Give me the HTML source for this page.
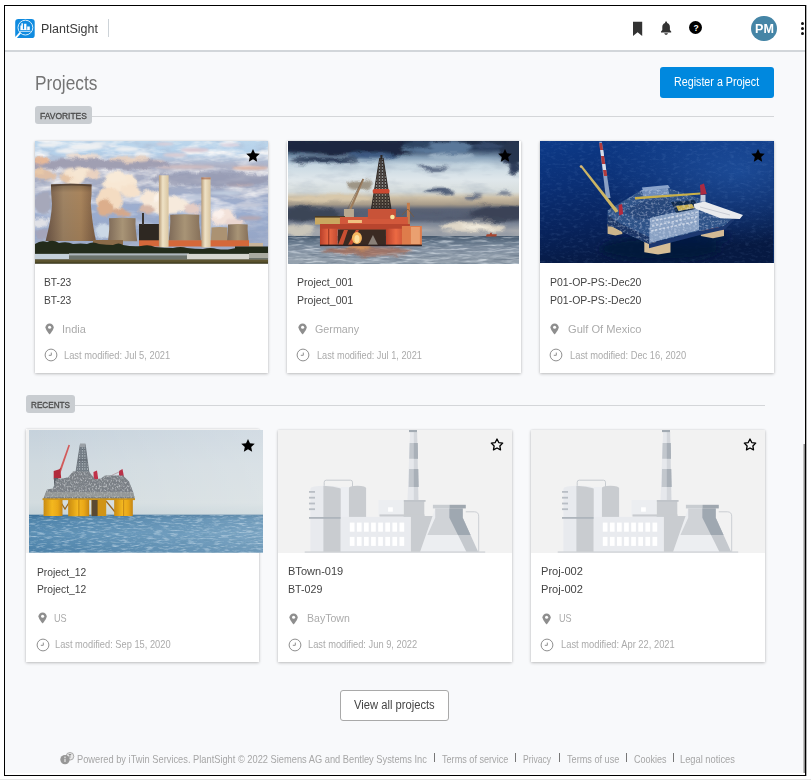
<!DOCTYPE html>
<html lang="en">
<head>
<meta charset="utf-8">
<title>PlantSight - Projects</title>
<style>
*{box-sizing:border-box;margin:0;padding:0}
html,body{width:811px;height:780px;overflow:hidden;background:#fff}
body{position:relative;font-family:"Liberation Sans",sans-serif;color:#3b3b3b;-webkit-font-smoothing:antialiased}
.abs{position:absolute}
#botline{left:0;top:779px;width:811px;height:1px;background:#e6e6e6}
#frame{left:4px;top:5px;width:802px;height:771px;border:1px solid #000;background:#fff;overflow:hidden}
#rb{left:806px;top:5px;width:1px;height:771px;background:#b0b0b0}
#content{left:5px;top:52px;width:800px;height:721px;background:#f8f9fb}
#hdrline{left:5px;top:50px;width:800px;height:2px;background:#d2d6da}
#scroll{left:803px;top:444px;width:2px;height:329px;background:linear-gradient(90deg,#d8d8d8,#777)}
.t{position:absolute;white-space:nowrap;line-height:1}
.badge{position:absolute;background:#c9cdd1;border-radius:3px}
.hline{position:absolute;height:1px;background:#d4d6d9}
.card{position:absolute;background:#fff;box-shadow:0 1px 3px rgba(0,0,0,.22),0 0 2px rgba(0,0,0,.10)}
.img{position:absolute;overflow:hidden}
.img svg{display:block}
.name{font-size:11.8px;color:#444}
.loc{font-size:11.6px;color:#ababab}
.mod{font-size:10.4px;color:#ababab}
.ft{font-size:10.2px;color:#a6a6a6}
.sep{position:absolute;width:1px;height:9px;top:753px;background:#777}
</style>
</head>
<body>
<div id="botline" class="abs"></div>
<div id="frame" class="abs"></div>
<div id="rb" class="abs"></div>
<div id="content" class="abs"></div>
<div id="hdrline" class="abs"></div>
<div id="scroll" class="abs"></div>

<!-- HEADER -->
<svg class="abs" style="left:15px;top:18px" width="21" height="21" viewBox="0 0 21 21">
  <rect x="0.2" y="0.9" width="19.5" height="19.2" rx="3.2" fill="#0f8be0"/>
  <circle cx="10.4" cy="9.6" r="7.4" fill="none" stroke="#d9eefb" stroke-width="1"/>
  <path d="M4.9 15.2 L1 19.6" stroke="#fff" stroke-width="1.8" stroke-linecap="round"/>
  <path d="M5.4 12V7.6h1V5.2h1.5v6h1.2V5.8h2.3v6h.8V8.6h2.6V12z" fill="#fff"/>
  <path d="M5 13.3h10.6" stroke="#cfe8fa" stroke-width="1"/>
</svg>
<div class="t" id="brand" style="left:41.5px;top:21.5px;font-size:13px;color:#3a3a3a;left:40.74px;top:22.2px;transform-origin:0 0;transform:scaleX(0.96)">PlantSight</div>
<div class="abs" style="left:108px;top:19px;width:1px;height:18px;background:#cdd3d8"></div>

<svg class="abs" style="left:632px;top:21px" width="11" height="16" viewBox="0 0 11 16"><path d="M1 0.8h9.2v14.2L5.6 11.2 1 15z" fill="#333"/></svg>
<svg class="abs" style="left:660px;top:21px" width="12" height="15" viewBox="0 0 12 15"><path d="M6.1 0.6c.6 0 1 .4 1 1v.3c1.800 .5 2.800 2 2.800 4v3.200l1.300 1.500v.8H1v-.8l1.300-1.500V5.900c0-2 1-3.500 2.800-4v-.3c0-.6.400-1 1-1z" fill="#333"/><path d="M4.300 12.300h3.600c0 .9-.8 1.500-1.800 1.500s-1.800-.6-1.800-1.500z" fill="#333"/></svg>
<div class="abs" style="left:689.300px;top:21.300px;width:13px;height:13px;border-radius:50%;background:#000"></div>
<div class="t" style="left:693.400px;top:23.900px;font-size:8.500px;font-weight:bold;color:#fff">?</div>
<div class="abs" style="left:751.400px;top:15.700px;width:25.500px;height:25.500px;border-radius:50%;background:#4585a6"></div>
<div class="t" id="pm" style="left:755.500px;top:21.500px;font-size:12.700px;font-weight:bold;color:#fff;left:755.1px;top:23.2px;transform-origin:0 0;transform:scaleX(0.991)">PM</div>
<div class="abs" style="left:801px;top:22px;width:3px;height:3px;border-radius:50%;background:#111"></div>
<div class="abs" style="left:801px;top:27px;width:3px;height:3px;border-radius:50%;background:#111"></div>
<div class="abs" style="left:801px;top:31.500px;width:3px;height:3px;border-radius:50%;background:#111"></div>

<!-- TITLE -->
<div class="t" id="title" style="left:35px;top:73px;font-size:19.500px;color:#747474;left:34.51px;top:74.3px;transform-origin:0 0;transform:scaleX(0.885)">Projects</div>
<div class="abs" style="left:660px;top:67px;width:114px;height:30.500px;border-radius:3px;background:#0088de"></div>
<div class="t" id="regbtn" style="left:674px;top:76px;font-size:12px;color:#fff;left:674.2px;top:76.1px;transform-origin:0 0;transform:scaleX(0.893)">Register a Project</div>

<!-- FAVORITES -->
<div class="hline" style="left:92px;top:116px;width:682px"></div>
<div class="badge" style="left:35px;top:106.300px;width:57.300px;height:17.400px"></div>
<div class="t" id="fav" style="left:39.500px;top:110.500px;font-size:9.900px;color:#4c4c4c;-webkit-text-stroke:.35px #4c4c4c;left:39.7px;top:110.7px;transform-origin:0 0;transform:scaleX(0.858)">FAVORITES</div>

<!-- RECENTS -->
<div class="hline" style="left:75px;top:405px;width:690px"></div>
<div class="badge" style="left:26px;top:395.400px;width:49.400px;height:17.400px"></div>
<div class="t" id="rec" style="left:31px;top:399.500px;font-size:9.900px;color:#4c4c4c;-webkit-text-stroke:.35px #4c4c4c;left:30.7px;top:400.0px;transform-origin:0 0;transform:scaleX(0.828)">RECENTS</div>

<!-- CARDS -->
<div class="card" style="left:35px;top:141px;width:233px;height:232px"></div>
<div class="img" style="left:35px;top:141px;width:233px;height:122.5px;background:#9fb4c8"><svg width="233" height="122.5" viewBox="0 0 233 122.500" preserveAspectRatio="none">
<defs>
<linearGradient id="p1sky" x1="0" y1="0" x2="0" y2="1"><stop offset="0" stop-color="#bcd6ec"/><stop offset=".1" stop-color="#b4d0ea"/><stop offset=".2" stop-color="#b0b4c8"/><stop offset=".36" stop-color="#a4acc4"/><stop offset=".55" stop-color="#9caed0"/><stop offset=".8" stop-color="#96a6c6"/><stop offset="1" stop-color="#aeb6cc"/></linearGradient>
<linearGradient id="p1t" x1="0" y1="0" x2="1" y2="0"><stop offset="0" stop-color="#6e5646"/><stop offset=".35" stop-color="#a08464"/><stop offset=".7" stop-color="#a8845c"/><stop offset="1" stop-color="#7e5e44"/></linearGradient>
<linearGradient id="p1t2" x1="0" y1="0" x2="1" y2="0"><stop offset="0" stop-color="#7e6a58"/><stop offset=".5" stop-color="#a89476"/><stop offset="1" stop-color="#86705a"/></linearGradient>
<linearGradient id="p1c" x1="0" y1="0" x2="1" y2="0"><stop offset="0" stop-color="#b89c78"/><stop offset=".4" stop-color="#efe2c6"/><stop offset="1" stop-color="#d8c4a0"/></linearGradient>
<linearGradient id="p1v" x1="0" y1="0" x2="0" y2="1"><stop offset="0" stop-color="#000" stop-opacity=".25"/><stop offset=".15" stop-color="#000" stop-opacity="0"/><stop offset="1" stop-color="#000" stop-opacity=".08"/></linearGradient>
<filter id="p1b" x="-20%" y="-20%" width="140%" height="140%"><feTurbulence type="fractalNoise" baseFrequency=".09" numOctaves="3" seed="5" result="n"/><feGaussianBlur in="SourceGraphic" stdDeviation="1" result="b"/><feDisplacementMap in="b" in2="n" scale="7" xChannelSelector="R" yChannelSelector="G"/></filter>
<filter id="p1b2" x="-20%" y="-20%" width="140%" height="140%"><feGaussianBlur stdDeviation="1.100"/></filter>
<filter id="p1n" x="0" y="0" width="100%" height="100%"><feTurbulence type="fractalNoise" baseFrequency=".035 .11" numOctaves="4" seed="7"/><feColorMatrix values="0 0 0 0 1  0 0 0 0 .97  0 0 0 0 .95  0 0 0 2.600 -1.050"/></filter>
<filter id="p1n2" x="0" y="0" width="100%" height="100%"><feTurbulence type="fractalNoise" baseFrequency=".05 .14" numOctaves="3" seed="23"/><feColorMatrix values="0 0 0 0 .36  0 0 0 0 .38  0 0 0 0 .50  0 0 0 2.200 -1.050"/></filter>
<filter id="p1g" x="0" y="0" width="100%" height="100%"><feTurbulence type="fractalNoise" baseFrequency=".9" numOctaves="2" seed="3"/><feColorMatrix values="0 0 0 0 0  0 0 0 0 0  0 0 0 0 0  0 0 0 .9 -.35"/></filter>
<linearGradient id="p1m" x1="0" y1="0" x2="0" y2="1"><stop offset="0" stop-color="#fff"/><stop offset=".55" stop-color="#fff" stop-opacity=".8"/><stop offset=".85" stop-color="#fff" stop-opacity=".25"/></linearGradient>
<mask id="p1mk"><rect width="233" height="105" fill="url(#p1m)"/></mask>
</defs>
<rect width="233" height="122.500" fill="url(#p1sky)"/>
<rect width="233" height="105" filter="url(#p1n2)" opacity=".35"/><g mask="url(#p1mk)"><rect width="233" height="105" filter="url(#p1n)" opacity=".9"/></g>
<!-- high clouds -->
<g filter="url(#p1b2)" fill="#eef0f2">
<ellipse cx="12" cy="4" rx="10" ry="2"/><ellipse cx="52" cy="6" rx="16" ry="2.500"/><ellipse cx="64" cy="2.500" rx="7" ry="1.500"/><ellipse cx="92" cy="8" rx="12" ry="2"/><ellipse cx="30" cy="10" rx="10" ry="2"/>
<ellipse cx="130" cy="3" rx="9" ry="1.500" fill="#dccfd8"/><ellipse cx="160" cy="9" rx="14" ry="2" fill="#d8c8d2"/><ellipse cx="195" cy="4" rx="10" ry="1.500" fill="#dcd0dc"/><ellipse cx="140" cy="14" rx="12" ry="2" fill="#d9cdd4"/><ellipse cx="108" cy="13" rx="8" ry="2"/>
<ellipse cx="215" cy="27" rx="18" ry="1.700" fill="#dcb4a4"/><ellipse cx="150" cy="26" rx="30" ry="2" fill="#cdbcc0"/><ellipse cx="120" cy="21" rx="10" ry="2" fill="#d8c4c0"/>
<ellipse cx="190" cy="52" rx="16" ry="1.800" fill="#c3cfe0"/><ellipse cx="215" cy="64" rx="14" ry="1.800" fill="#c8ccda"/><ellipse cx="160" cy="56" rx="10" ry="2" fill="#bfc9dc"/><ellipse cx="205" cy="43" rx="14" ry="2.500" fill="#b8a8b0"/><ellipse cx="150" cy="41" rx="7" ry="2.500" fill="#c6cad8"/><ellipse cx="215" cy="77" rx="12" ry="2" fill="#b4a8b4"/>
</g>
<!-- cloud band & steam -->
<g filter="url(#p1b)">
<ellipse cx="60" cy="23" rx="75" ry="5.500" fill="#a09fb2"/>
<ellipse cx="175" cy="38" rx="60" ry="7" fill="#9599b1" opacity=".8"/>
<ellipse cx="6" cy="20" rx="7" ry="3.500" fill="#e6b898"/>
<ellipse cx="48" cy="15.500" rx="18" ry="2.500" fill="#ecdcd0"/><ellipse cx="95" cy="18.500" rx="20" ry="2.500" fill="#e6d0c0"/>
<ellipse cx="9" cy="34" rx="12" ry="6" fill="#dfbfa6"/><ellipse cx="4" cy="30" rx="5" ry="4" fill="#e8c8a8"/>
<ellipse cx="8" cy="62" rx="9" ry="11" fill="#a6a8ba"/><ellipse cx="6" cy="81" rx="9" ry="4" fill="#e0e1e6"/><ellipse cx="8" cy="93" rx="8" ry="5" fill="#a4a4ba"/>
<ellipse cx="38" cy="36" rx="11" ry="8" fill="#f6e4cf"/><ellipse cx="47" cy="32" rx="10" ry="6" fill="#f6e6d2"/><ellipse cx="58" cy="33" rx="7" ry="4.500" fill="#ead2c0"/><ellipse cx="30" cy="38" rx="6" ry="4" fill="#e6c6a8"/>
<ellipse cx="84" cy="42" rx="17" ry="10" fill="#f8e8d4"/><ellipse cx="74" cy="60" rx="14" ry="13" fill="#f4dcc2"/><ellipse cx="96" cy="50" rx="10" ry="7" fill="#f6e2cc"/><ellipse cx="70" cy="67" rx="9" ry="8" fill="#dcae8c"/><ellipse cx="86" cy="72" rx="10" ry="4" fill="#d4a88c"/><ellipse cx="80" cy="36" rx="9" ry="5" fill="#f8ead8"/>
<ellipse cx="68" cy="90" rx="8" ry="8" fill="#cbd8e6"/>
<ellipse cx="117" cy="58" rx="12" ry="9" fill="#f7e8d8"/><ellipse cx="134" cy="64" rx="20" ry="9" fill="#f6eadc"/><ellipse cx="157" cy="68" rx="9" ry="6" fill="#e4ccc4"/><ellipse cx="112" cy="68" rx="8" ry="4" fill="#d8b8a8"/><ellipse cx="126" cy="57" rx="8" ry="5" fill="#fbf3ea"/>
<ellipse cx="188" cy="76" rx="13" ry="8" fill="#f3e2da"/><ellipse cx="200" cy="82" rx="8" ry="4" fill="#ead6d0"/><ellipse cx="182" cy="73" rx="6" ry="4" fill="#fbf1ec"/>
</g>
<!-- dark building -->
<rect x="104" y="83" width="22" height="20" fill="#2e2822"/><rect x="107" y="72" width="2" height="12" fill="#3a3430"/>
<!-- cooling towers -->
<path d="M16 43.500q20-1.600 40.500 0 .5 10 -.700 19c1 14 2.500 25 5.200 37.500H10.600C14.500 85 16.500 74 17 62.500 16.300 55 16 50 16 43.500z" fill="url(#p1t)"/>
<path d="M16 43.500q20-1.600 40.500 0v2q-20-1.800-40.500 0z" fill="#5e483a" opacity=".7"/><path d="M16 43.500q20-1.600 40.500 0 .5 10 -.700 19c1 14 2.500 25 5.200 37.500H10.600C14.500 85 16.500 74 17 62.500 16.300 55 16 50 16 43.500z" fill="url(#p1v)"/>
<path d="M74 77.300q13-1 26.600 0-.4 6 .2 11 .600 6 1.400 12H73q.8-6 1.200-12 .3-5-.2-11z" fill="url(#p1t2)"/>
<path d="M135.200 73.800q14.500-1.200 29.100 0-.5 7 .3 13 .7 7 1.400 13h-32.400q.8-6 1.400-13 .5-6 .2-13z" fill="url(#p1t2)"/>
<path d="M176.400 86.500q8-.8 16.100 0-.3 4 .1 8l.6 6.500h-17.500l.5-6.500q.4-4 .2-8z" fill="#ab9272"/>
<path d="M193 83.400q9.800-1 19.700 0-.3 5 .2 9l.8 9h-21.700l.7-9q.5-4 .3-9z" fill="url(#p1t2)"/>
<!-- low brown building -->
<rect x="58" y="99" width="30" height="8" fill="#8a6a48"/>
<!-- orange band -->
<rect x="104" y="99.300" width="110" height="6.200" fill="#d4683a"/>
<rect x="214" y="102" width="14" height="4" fill="#c8b49a"/><rect x="200" y="105.500" width="33" height="7" fill="#232b1a"/>
<!-- chimneys -->
<rect x="123.900" y="34.300" width="9.700" height="72" fill="url(#p1c)"/>
<rect x="166.400" y="36.400" width="9.200" height="70" fill="url(#p1c)"/>
<rect x="166.400" y="36.400" width="9.200" height="2" fill="#a05a40" opacity=".6"/>
<!-- tree line -->
<path d="M0 103q6-4 12-2 6-3 12 1 8-2 14 1 8-1 14 0 6-3 12 0 8 1 14 1 6-3 10 0 10 2 18 1 8-2 14 1 10 1 18 1 8-2 14 0 8 1 16 1 8-2 14 0 8 1 14 0 8-2 14 0 5 0 9-1V114H0z" fill="#232b1a"/>
<!-- strip -->
<rect x="0" y="112.700" width="233" height="5.800" fill="#6c736c"/>
<rect x="0" y="113" width="34" height="5" fill="#c4d0da"/>
<rect x="34" y="112.400" width="120" height="2" fill="#aeb6bc"/>
<rect x="152" y="113" width="62" height="5.500" fill="#d6d6cf"/>
<rect x="214" y="112" width="19" height="5" fill="#a9aaa0"/>
<rect x="0" y="118.400" width="233" height="4.100" fill="#5d5530"/>
<rect x="0" y="120.800" width="233" height="1.700" fill="#4a4524"/>
</svg>
</div>
<svg class="abs" style="left:244.6px;top:148.3px" width="16" height="16" viewBox="0 0 16 16"><path d="M8.00 0.90L9.97 5.29L14.75 5.81L11.19 9.04L12.17 13.74L8.00 11.35L3.83 13.74L4.81 9.04L1.25 5.81L6.03 5.29z" fill="#000"/></svg>
<div class="t name" id="c1n1" style="left:44.8px;top:276.7px;left:44.3px;top:277.2px;transform-origin:0 0;transform:scaleX(0.868)">BT-23</div>
<div class="t name" id="c1n2" style="left:44.8px;top:294.5px;left:44.3px;top:295.0px;transform-origin:0 0;transform:scaleX(0.868)">BT-23</div>
<svg class="abs" style="left:44.9px;top:322.8px" width="9.2" height="12" viewBox="0 0 10 13"><path d="M5 0.400C2.500 0.400 0.500 2.300 0.500 4.700c0 3 4.500 7.800 4.500 7.800s4.500-4.800 4.500-7.800C9.500 2.300 7.500 0.400 5 0.400z" fill="#8e8e8e"/><circle cx="5" cy="4.600" r="1.700" fill="#fff"/></svg>
<div class="t loc" id="c1loc" style="left:62.3px;top:323.0px;left:61.55px;top:322.6px;transform-origin:0 0;transform:scaleX(0.948)">India</div>
<svg class="abs" style="left:43.6px;top:348.3px" width="14" height="14" viewBox="0 0 14 14"><circle cx="7" cy="7" r="5.900" fill="none" stroke="#8f8f8f" stroke-width="1"/><path d="M7.300 4.600v2.700H4.800" fill="none" stroke="#8f8f8f" stroke-width="1"/></svg>
<div class="t mod" id="c1mod" style="left:63.8px;top:350.5px;left:63.5px;top:351.2px;transform-origin:0 0;transform:scaleX(0.897)">Last modified: Jul 5, 2021</div>
<div class="card" style="left:287px;top:141px;width:233.7px;height:232px"></div>
<div class="img" style="left:288.2px;top:141px;width:231px;height:122.5px;background:#7b8fa0"><svg width="231" height="122.5" viewBox="0 0 231.200 122.500" preserveAspectRatio="none">
<defs>
<linearGradient id="p2sky" x1="0" y1="0" x2="0" y2="1"><stop offset="0" stop-color="#1c2a42"/><stop offset=".08" stop-color="#263a58"/><stop offset=".17" stop-color="#86a0b8"/><stop offset=".25" stop-color="#c8d8e2"/><stop offset=".4" stop-color="#dfe7eb"/><stop offset=".53" stop-color="#d8dedd"/><stop offset=".59" stop-color="#cdbfa6"/><stop offset=".66" stop-color="#a89c8a"/><stop offset=".71" stop-color="#5c6476"/><stop offset=".8" stop-color="#4c5468"/><stop offset=".86" stop-color="#7e8796"/><stop offset=".93" stop-color="#a8aaae"/><stop offset="1" stop-color="#9aa0a8"/></linearGradient>
<linearGradient id="p2sea" x1="0" y1="0" x2="0" y2="1"><stop offset="0" stop-color="#44566a"/><stop offset=".2" stop-color="#64768a"/><stop offset=".5" stop-color="#8a98a8"/><stop offset="1" stop-color="#96a2ae"/></linearGradient>
<linearGradient id="p2leg" x1="0" y1="0" x2="1" y2="0"><stop offset="0" stop-color="#b8402a"/><stop offset=".5" stop-color="#ec6a44"/><stop offset="1" stop-color="#c04a30"/></linearGradient>
<filter id="p2b" x="-20%" y="-20%" width="140%" height="140%"><feTurbulence type="fractalNoise" baseFrequency=".05 .1" numOctaves="3" seed="14" result="n"/><feGaussianBlur in="SourceGraphic" stdDeviation="1.800" result="b"/><feDisplacementMap in="b" in2="n" scale="9" xChannelSelector="R" yChannelSelector="G"/></filter><pattern id="p2lat" width="3" height="3" patternUnits="userSpaceOnUse"><path d="M0 0L3 3M3 0L0 3M0 1.500h3" stroke="#2c2420" stroke-width=".7"/></pattern>
<filter id="p2b1" x="-20%" y="-20%" width="140%" height="140%"><feGaussianBlur stdDeviation=".55"/></filter>
<filter id="p2n" x="0" y="0" width="100%" height="100%"><feTurbulence type="fractalNoise" baseFrequency=".03 .09" numOctaves="4" seed="11"/><feColorMatrix values="0 0 0 0 .1  0 0 0 0 .15  0 0 0 0 .25  0 0 0 2.400 -1.100"/></filter>
<filter id="p2w" x="0" y="0" width="100%" height="100%"><feTurbulence type="fractalNoise" baseFrequency=".06 .5" numOctaves="3" seed="5"/><feColorMatrix values="0 0 0 0 .85  0 0 0 0 .9  0 0 0 0 .95  0 0 0 2.800 -1.300"/></filter>
<filter id="p2w2" x="0" y="0" width="100%" height="100%"><feTurbulence type="fractalNoise" baseFrequency=".05 .45" numOctaves="3" seed="19"/><feColorMatrix values="0 0 0 0 .1  0 0 0 0 .14  0 0 0 0 .2  0 0 0 2.600 -1.200"/></filter>
</defs>
<rect width="231.200" height="96" fill="url(#p2sky)"/>
<rect width="231.200" height="96" filter="url(#p2n)" opacity=".18"/>
<g filter="url(#p2b)">
<ellipse cx="70" cy="6" rx="85" ry="8" fill="#1a2840"/>
<ellipse cx="36" cy="19" rx="34" ry="3" fill="#2a3a56"/>
<ellipse cx="85" cy="15" rx="24" ry="3.500" fill="#3c5a82"/>
<ellipse cx="150" cy="7" rx="36" ry="6" fill="#5a789a"/>
<ellipse cx="165" cy="16" rx="24" ry="4" fill="#9cb2c6"/>
<ellipse cx="130" cy="4" rx="14" ry="4" fill="#2e4464"/>
<ellipse cx="224" cy="11" rx="12" ry="13" fill="#26364f"/>
<ellipse cx="228" cy="28" rx="6" ry="6" fill="#2e3e5a"/>
<ellipse cx="200" cy="5" rx="14" ry="4" fill="#34486a"/>
<ellipse cx="145" cy="27" rx="14" ry="2.300" fill="#54647e"/>
<ellipse cx="152" cy="50" rx="15" ry="3.200" fill="#4e5c76"/>
<ellipse cx="186" cy="56.500" rx="9" ry="2.300" fill="#5a6680"/>
<ellipse cx="216" cy="52" rx="7" ry="1.800" fill="#5e6a82"/>
<ellipse cx="72" cy="44" rx="12" ry="5" fill="#a49c8c"/>
<ellipse cx="40" cy="57" rx="45" ry="3.500" fill="#d8c8aa"/>
<ellipse cx="20" cy="73" rx="30" ry="6.500" fill="#3a4456"/>
<ellipse cx="212" cy="72" rx="30" ry="8" fill="#3a4256"/>
<ellipse cx="120" cy="75" rx="60" ry="4" fill="#566074"/>
<ellipse cx="12" cy="89" rx="16" ry="5" fill="#cac6ba"/>
<ellipse cx="185" cy="86" rx="32" ry="5" fill="#e0d8c8"/>
<ellipse cx="190" cy="86" rx="15" ry="2.500" fill="#f2ecde"/>
</g>
<!-- sea -->
<rect y="95" width="231.200" height="27.500" fill="url(#p2sea)"/>
<rect y="95" width="231.200" height="27.500" filter="url(#p2w)" opacity=".55"/>
<rect y="95" width="231.200" height="27.500" filter="url(#p2w2)" opacity=".5"/>
<g filter="url(#p2b)"><ellipse cx="80" cy="110" rx="45" ry="5" fill="#a85a3c" opacity=".6"/><ellipse cx="70" cy="106" rx="12" ry="3" fill="#e89a50" opacity=".7"/></g>
<!-- ship -->
<path d="M198 95.500l1-2.200h3l.5-1.500h1.500v1.500H209l-.5 2.200z" fill="#a8452e"/>
<!-- smoke -->
<g filter="url(#p2b)"><ellipse cx="72" cy="44" rx="12" ry="5" fill="#9c9484" opacity=".8"/></g>
<!-- derrick -->
<g filter="url(#p2b1)">
<path d="M91.800 17h3.400L103.500 71H83z" fill="#3a302c" opacity=".45"/><path d="M91.800 17h3.400L103.500 71H83z" fill="url(#p2lat)"/><path d="M91.800 17L83 71M95.200 17L103.500 71" stroke="#2a2420" stroke-width=".9"/>
<path d="M92.500 14h2v4h-2z" fill="#2a2420"/>
<rect x="84.800" y="48" width="16.800" height="4.600" rx="1.500" fill="#cc4a30"/>
<path d="M74.600 37.500l1.600.8L61 74.500l-2.400-.6z" fill="#9c7c5c"/>
<path d="M75 38L57.500 72" stroke="#6e5a48" stroke-width=".6"/>
<rect x="56" y="68" width="10" height="8" fill="#b8a890"/>
<!-- mast right -->
<rect x="119" y="61.800" width="3" height="24" fill="#c47e4e"/>
<path d="M114 74l6-6 6 8" stroke="#7a5a3a" stroke-width=".8" fill="none"/>
<!-- deck -->
<rect x="27" y="75.500" width="27" height="8" fill="#c9a860"/>
<rect x="27" y="75" width="30" height="1.600" fill="#4a3a28"/>
<rect x="52" y="76" width="68" height="13" fill="#d2583a"/>
<rect x="80" y="68" width="28" height="10" fill="#c85238"/>
<circle cx="104.500" cy="76" r="2.300" fill="#f8e8a0"/>
<rect x="32" y="83" width="90" height="5.500" fill="#b8452e"/>
<rect x="60" y="79" width="14" height="3" fill="#f0c080"/>
<!-- legs -->
<rect x="32" y="87.700" width="17.700" height="16.500" fill="url(#p2leg)"/>
<rect x="40.300" y="87.700" width="1" height="16.500" fill="#8a3020"/>
<rect x="98" y="87.700" width="20" height="16.500" fill="url(#p2leg)"/>
<rect x="114" y="85" width="20" height="19" fill="#de7c4c"/>
<rect x="123" y="86" width="9" height="17" fill="#eaa070"/>
<rect x="50" y="88.500" width="48" height="15.500" fill="#3a2a24"/>
<path d="M50 104l6-15h4l-5 15zM60 104l8-15h3l-7 15z" fill="#c85030"/>
<ellipse cx="69" cy="97" rx="5" ry="6" fill="#f6b860"/>
<ellipse cx="69" cy="98" rx="2.500" ry="4" fill="#fde0a0"/>
<path d="M80 104l5-10 5 10z" fill="#8a8078"/>
<rect x="32" y="103.600" width="102" height="1.500" fill="#2e2420"/>
</g>
</svg>
</div>
<svg class="abs" style="left:497.3px;top:148.3px" width="16" height="16" viewBox="0 0 16 16"><path d="M8.00 0.90L9.97 5.29L14.75 5.81L11.19 9.04L12.17 13.74L8.00 11.35L3.83 13.74L4.81 9.04L1.25 5.81L6.03 5.29z" fill="#000"/></svg>
<div class="t name" id="c2n1" style="left:297.6px;top:276.7px;left:297.4px;top:277.2px;transform-origin:0 0;transform:scaleX(0.893)">Project_001</div>
<div class="t name" id="c2n2" style="left:297.6px;top:294.5px;left:297.4px;top:295.0px;transform-origin:0 0;transform:scaleX(0.893)">Project_001</div>
<svg class="abs" style="left:297.7px;top:322.8px" width="9.2" height="12" viewBox="0 0 10 13"><path d="M5 0.400C2.500 0.400 0.500 2.300 0.500 4.700c0 3 4.500 7.800 4.500 7.800s4.500-4.800 4.500-7.800C9.500 2.300 7.500 0.400 5 0.400z" fill="#8e8e8e"/><circle cx="5" cy="4.600" r="1.700" fill="#fff"/></svg>
<div class="t loc" id="c2loc" style="left:315.1px;top:323.0px;left:315.0px;top:323px;transform-origin:0 0;transform:scaleX(0.927)">Germany</div>
<svg class="abs" style="left:296.4px;top:348.3px" width="14" height="14" viewBox="0 0 14 14"><circle cx="7" cy="7" r="5.900" fill="none" stroke="#8f8f8f" stroke-width="1"/><path d="M7.300 4.600v2.700H4.800" fill="none" stroke="#8f8f8f" stroke-width="1"/></svg>
<div class="t mod" id="c2mod" style="left:316.6px;top:350.5px;left:317.0px;top:351.3px;transform-origin:0 0;transform:scaleX(0.886)">Last modified: Jul 1, 2021</div>
<div class="card" style="left:540.2px;top:140.6px;width:233.5px;height:232.4px"></div>
<div class="img" style="left:540.2px;top:140.6px;width:233.5px;height:122.9px;background:#0f3f8a"><svg width="233.5" height="122.9" viewBox="0 0 233.500 122.900" preserveAspectRatio="none">
<defs>
<linearGradient id="p3sea" x1="0" y1="0" x2=".25" y2="1"><stop offset="0" stop-color="#0d3a88"/><stop offset=".35" stop-color="#0b3076"/><stop offset=".7" stop-color="#08235c"/><stop offset="1" stop-color="#061942"/></linearGradient>
<radialGradient id="p3hl" cx=".85" cy=".25" r=".6"><stop offset="0" stop-color="#2a62b4" stop-opacity=".55"/><stop offset="1" stop-color="#2a62b4" stop-opacity="0"/></radialGradient>
<filter id="p3b" x="-20%" y="-20%" width="140%" height="140%"><feGaussianBlur stdDeviation="3"/></filter>
<filter id="p3b1" x="-10%" y="-10%" width="120%" height="120%"><feGaussianBlur stdDeviation=".7"/></filter>
<filter id="p3w" x="0" y="0" width="100%" height="100%"><feTurbulence type="fractalNoise" baseFrequency=".18 .4" numOctaves="3" seed="4"/><feColorMatrix values="0 0 0 0 .3  0 0 0 0 .5  0 0 0 0 .85  0 0 0 2 -1"/></filter>
<filter id="p3t" x="0" y="0" width="100%" height="100%"><feTurbulence type="fractalNoise" baseFrequency=".35 .45" numOctaves="2" seed="9"/><feColorMatrix values="0 0 0 0 .85  0 0 0 0 .9  0 0 0 0 1  0 0 0 3 -1.400"/></filter>
<clipPath id="p3cp"><path d="M67.600 69.200L101.200 49.300 128 47l32.900 11 33.600 18-10.500 9-25.200 5.200-50.300 12.600L81.200 90.200 67.600 82.900z"/></clipPath>
</defs>
<rect width="233.500" height="122.900" fill="url(#p3sea)"/>
<rect width="233.500" height="122.900" fill="url(#p3hl)"/>
<rect width="233.500" height="122.900" filter="url(#p3w)" opacity=".16"/>
<g filter="url(#p3b)"><ellipse cx="120" cy="108" rx="60" ry="12" fill="#06153a" opacity=".85"/><ellipse cx="150" cy="96" rx="40" ry="8" fill="#071a44" opacity=".7"/></g>
<g filter="url(#p3b1)">
<!-- legs -->
<path d="M67.600 83h14.700v10l-7 1.500-7.700-1.800z" fill="#cdb58b"/>
<path d="M67.600 83h14.700v2.500H67.600z" fill="#3a4a6a"/>
<path d="M160.900 86h23.100v9l-11 2.200-12.100-2.200z" fill="#d3bb95"/>
<path d="M160.900 86h23.100v3h-23.100z" fill="#b06a64"/>
<path d="M104.300 101h26.200v10.500l-12.500 2-13.700-2.200z" fill="#d6be96"/>
<!-- platform -->
<path d="M67.600 69.200L101.200 49.300 128 47l32.900 11 33.600 18-10.500 9-25.200 5.200-50.300 12.600L81.200 90.200 67.600 82.900z" fill="#2f5288"/>
<path d="M110 76l49-9 0 22-50 13z" fill="#8aa2c4"/>
<path d="M112 80l46-9M112 85l46-9.500M111 90l47-10" stroke="#d4dcea" stroke-width="1.600" stroke-dasharray="2.500 1.500" opacity=".8"/>
<path d="M67.600 74l13.600 9 28 13v7l-28-12.800-13.600-7.300z" fill="#1b3666"/>
<path d="M109 102.800l50-12.600 25.200-5.200 10.300-9v3l-10 9.500-25.500 5.800-50 13z" fill="#1c3870"/>
<path d="M101.200 49.300l26.800-2.300 1.500 7-25 3.500z" fill="#6f8dba"/>
<path d="M102 46.500l26-2.500 2 3-27 3z" fill="#8aa4cc"/>
<path d="M131 61l23-2 6 8-24 5z" fill="#11294e"/>
<path d="M136 65l16-2 2.500 4-16 3z" fill="#c4ac50"/>
<path d="M84 70l20-10 24-3 6 14-24 6-12 2z" fill="#27467a"/>
<g clip-path="url(#p3cp)"><rect x="60" y="40" width="140" height="70" filter="url(#p3t)" opacity=".42"/></g>
<!-- helideck -->
<path d="M153.800 63l10.500-2.500 38.700 13.500-3.200 4-19.400-.8-26-10z" fill="#e9ebee"/>
<path d="M160 66l30 8" stroke="#c8ccd4" stroke-width="1"/>
<!-- flare mast -->
<path d="M59.200 0.800h2.600L70.500 57h-4.600z" fill="#8aa0c4"/>
<path d="M59.300 2h2.700l1 7h-3zM61 15h3.100l1.100 8h-3.200zM63 29h3.300l1 6h-3.300z" fill="#b23a3e"/>
<path d="M60.300 9h3l.8 6h-3zM62.200 23h3.200l.8 6h-3.200z" fill="#d8dde8"/>
<!-- yellow boom -->
<path d="M40 25.200l2-.6L78.500 70l-3 1.800z" fill="#cdb565"/>
<circle cx="41" cy="25.500" r="1.300" fill="#d8b878"/>
<path d="M95 56l65.500-4.600v2.200L95 58.600z" fill="#c9b04a"/>
<!-- red cabs -->
<path d="M78.600 64l3.500-1 1 10-4 1.500z" fill="#b32a3c"/>
<path d="M160 44l4-1.500 2.700 10.500-6 1z" fill="#aa2a42"/>
<rect x="160.500" y="54" width="5" height="6.500" fill="#c2cadb"/>
</g>
</svg>
</div>
<svg class="abs" style="left:750.3px;top:147.9px" width="16" height="16" viewBox="0 0 16 16"><path d="M8.00 0.90L9.97 5.29L14.75 5.81L11.19 9.04L12.17 13.74L8.00 11.35L3.83 13.74L4.81 9.04L1.25 5.81L6.03 5.29z" fill="#000"/></svg>
<div class="t name" id="c3n1" style="left:550px;top:276.7px;left:550.2px;top:277.2px;transform-origin:0 0;transform:scaleX(0.888)">P01-OP-PS:-Dec20</div>
<div class="t name" id="c3n2" style="left:550px;top:294.5px;left:550.2px;top:295.0px;transform-origin:0 0;transform:scaleX(0.888)">P01-OP-PS:-Dec20</div>
<svg class="abs" style="left:550.1px;top:322.8px" width="9.2" height="12" viewBox="0 0 10 13"><path d="M5 0.400C2.500 0.400 0.500 2.300 0.500 4.700c0 3 4.500 7.800 4.500 7.800s4.500-4.800 4.500-7.800C9.500 2.300 7.500 0.400 5 0.400z" fill="#8e8e8e"/><circle cx="5" cy="4.600" r="1.700" fill="#fff"/></svg>
<div class="t loc" id="c3loc" style="left:567.5px;top:323.0px;left:568.0px;top:323px;transform-origin:0 0;transform:scaleX(0.958)">Gulf Of Mexico</div>
<svg class="abs" style="left:548.8px;top:348.3px" width="14" height="14" viewBox="0 0 14 14"><circle cx="7" cy="7" r="5.900" fill="none" stroke="#8f8f8f" stroke-width="1"/><path d="M7.300 4.600v2.700H4.800" fill="none" stroke="#8f8f8f" stroke-width="1"/></svg>
<div class="t mod" id="c3mod" style="left:569px;top:350.5px;left:569.6px;top:351.3px;transform-origin:0 0;transform:scaleX(0.898)">Last modified: Dec 16, 2020</div>
<div class="card" style="left:26px;top:429.2px;width:233.3px;height:232.8px"></div>
<div class="abs" style="left:26px;top:429.2px;width:233.3px;height:123.6px;background:#f2f2f2;border-radius:2px 0 0 0"></div>
<div class="img" style="left:29px;top:430.3px;width:234px;height:122.5px;background:#c5d3dc"><svg width="234" height="122.5" viewBox="0 0 234 122.500" preserveAspectRatio="none">
<defs>
<linearGradient id="p4sky" x1="0" y1="0" x2="0" y2="1"><stop offset="0" stop-color="#c6d2dc"/><stop offset=".4" stop-color="#cfd9df"/><stop offset=".85" stop-color="#d3dcdf"/><stop offset="1" stop-color="#c4d2d8"/></linearGradient>
<linearGradient id="p4skx" x1="0" y1="0" x2="1" y2="0"><stop offset="0" stop-color="#fff" stop-opacity="0"/><stop offset="1" stop-color="#fff" stop-opacity=".22"/></linearGradient>
<linearGradient id="p4sea" x1="0" y1="0" x2="0" y2="1"><stop offset="0" stop-color="#3a6e96"/><stop offset=".12" stop-color="#4c82aa"/><stop offset=".5" stop-color="#5a8eb4"/><stop offset="1" stop-color="#4a80a8"/></linearGradient>
<linearGradient id="p4leg" x1="0" y1="0" x2="1" y2="0"><stop offset="0" stop-color="#c88a10"/><stop offset=".45" stop-color="#f4b820"/><stop offset=".75" stop-color="#eaa818"/><stop offset="1" stop-color="#c48410"/></linearGradient>
<filter id="p4b1" x="-10%" y="-10%" width="120%" height="120%"><feGaussianBlur stdDeviation=".6"/></filter>
<filter id="p4w" x="0" y="0" width="100%" height="100%"><feTurbulence type="fractalNoise" baseFrequency=".12 .6" numOctaves="3" seed="8"/><feColorMatrix values="0 0 0 0 .82  0 0 0 0 .9  0 0 0 0 .96  0 0 0 2.600 -1.250"/></filter>
<filter id="p4w2" x="0" y="0" width="100%" height="100%"><feTurbulence type="fractalNoise" baseFrequency=".1 .5" numOctaves="3" seed="31"/><feColorMatrix values="0 0 0 0 .12  0 0 0 0 .28  0 0 0 0 .42  0 0 0 2.600 -1.250"/></filter>
<filter id="p4t" x="0" y="0" width="100%" height="100%"><feTurbulence type="fractalNoise" baseFrequency=".5 .6" numOctaves="2" seed="2"/><feColorMatrix values="0 0 0 0 .18  0 0 0 0 .2  0 0 0 0 .23  3.500 0 0 0 -1.500"/></filter>
<clipPath id="p4cp"><path d="M14 69.500l4-10 6-1 3-9 12-2 5-6h16l6 8 6-1 4-3h18l6 6 4 10 2 8z"/></clipPath>
<filter id="p4t2" x="0" y="0" width="100%" height="100%"><feTurbulence type="fractalNoise" baseFrequency=".6 .5" numOctaves="2" seed="12"/><feColorMatrix values="0 0 0 0 .8  0 0 0 0 .82  0 0 0 0 .84  0 3.500 0 0 -1.600"/></filter><pattern id="p4lat" width="2.600" height="2.600" patternUnits="userSpaceOnUse"><path d="M0 0L2.600 2.600M2.600 0L0 2.600M0 1.300h2.600" stroke="#59626b" stroke-width=".6"/></pattern>
</defs>
<rect width="234" height="85.500" fill="url(#p4sky)"/>
<rect width="234" height="85.500" fill="url(#p4skx)"/>
<rect y="84.700" width="234" height="37.800" fill="url(#p4sea)"/>
<rect y="84.700" width="234" height="37.800" fill="url(#p4skx)"/>
<rect y="85.500" width="234" height="37" filter="url(#p4w)" opacity=".5"/>
<rect y="85.500" width="234" height="37" filter="url(#p4w2)" opacity=".45"/>
<g filter="url(#p4b1)">
<!-- derrick -->
<path d="M51.300 14.500h4.900L60.200 45H46.500z" fill="#8a929a" opacity=".45"/><path d="M51.300 14.500h4.900L60.200 45H46.500z" fill="url(#p4lat)"/><path d="M51.300 14.500L46.500 45M56.200 14.500L60.200 45" stroke="#646c74" stroke-width=".8"/>
<rect x="51" y="13.500" width="5.500" height="3.500" fill="#9aa0a6"/>
<path d="M49 30h9" stroke="#5c646c" stroke-width="1"/>
<!-- left crane -->
<path d="M39.500 14.800l1.500.5L31 44.500l-2-.5z" fill="#d25a5a"/>
<path d="M31.500 38L28 47" stroke="#8a3038" stroke-width=".6"/>
<path d="M24.700 41l6.500-2 1 9-7.500 1.500z" fill="#b22a3a"/>
<rect x="25" y="48" width="4" height="8" fill="#5a6068"/>
<!-- mid crane -->
<path d="M64.500 42l3.500-1.500 1.200 8.500-4.500 1z" fill="#c03048"/>
<!-- right crane -->
<path d="M90 41l3.500-2 2 11-5.500 1.500z" fill="#ba3048"/>
<path d="M74 49.500l17-8" stroke="#9a7078" stroke-width=".5"/>
<rect x="91" y="50" width="2.500" height="6" fill="#8a4a54"/>
<!-- deck -->
<path d="M14 69.500l4-10 6-1 3-9 12-2 5-6h16l6 8 6-1 4-3h18l6 6 4 10 2 8z" fill="#7c8186"/>
<g clip-path="url(#p4cp)"><rect x="10" y="38" width="100" height="34" filter="url(#p4t)" opacity=".7"/><rect x="10" y="38" width="100" height="34" filter="url(#p4t2)" opacity=".5"/><rect x="14" y="62" width="92" height="5" fill="#a4a6a4" opacity=".6"/></g>
<rect x="13.500" y="68.300" width="92.500" height="1.800" fill="#c8921c"/>
<!-- braces -->
<path d="M31 71l5 8 5-8M77 71l9 11" stroke="#9a6820" stroke-width="1.300" fill="none"/>
<!-- legs -->
<rect x="62.600" y="70" width="14.600" height="16" fill="#d09414"/>
<rect x="62.600" y="70" width="6" height="16" fill="#5a4a30"/>
<rect x="14.600" y="69.800" width="18.900" height="16.200" fill="url(#p4leg)"/>
<rect x="39.200" y="69.800" width="21" height="16.400" fill="url(#p4leg)"/>
<rect x="85.200" y="69.800" width="18.600" height="16.200" fill="url(#p4leg)"/>
<rect x="49.500" y="69.800" width=".8" height="16.400" fill="#b87c10"/>
<rect x="94.300" y="69.800" width=".8" height="16.200" fill="#b87c10"/>
</g>
</svg>
</div>
<svg class="abs" style="left:239.6px;top:437.6px" width="16" height="16" viewBox="0 0 16 16"><path d="M8.00 0.90L9.97 5.29L14.75 5.81L11.19 9.04L12.17 13.74L8.00 11.35L3.83 13.74L4.81 9.04L1.25 5.81L6.03 5.29z" fill="#000"/></svg>
<div class="t name" id="r1n1" style="left:37.4px;top:566.0px;left:37.4px;top:566.5px;transform-origin:0 0;transform:scaleX(0.872)">Project_12</div>
<div class="t name" id="r1n2" style="left:37.4px;top:583.8px;left:37.4px;top:584.3px;transform-origin:0 0;transform:scaleX(0.872)">Project_12</div>
<svg class="abs" style="left:37.5px;top:612.1px" width="9.2" height="12" viewBox="0 0 10 13"><path d="M5 0.400C2.500 0.400 0.500 2.300 0.500 4.700c0 3 4.500 7.800 4.500 7.800s4.500-4.800 4.500-7.800C9.500 2.300 7.500 0.400 5 0.400z" fill="#8e8e8e"/><circle cx="5" cy="4.600" r="1.700" fill="#fff"/></svg>
<div class="t loc" id="r1loc" style="left:54.9px;top:612.3px;left:53.5px;top:612.0px;transform-origin:0 0;transform:scaleX(0.788)">US</div>
<svg class="abs" style="left:36.2px;top:637.6px" width="14" height="14" viewBox="0 0 14 14"><circle cx="7" cy="7" r="5.900" fill="none" stroke="#8f8f8f" stroke-width="1"/><path d="M7.300 4.600v2.700H4.800" fill="none" stroke="#8f8f8f" stroke-width="1"/></svg>
<div class="t mod" id="r1mod" style="left:56.4px;top:639.8px;left:55.1px;top:640.0px;transform-origin:0 0;transform:scaleX(0.893)">Last modified: Sep 15, 2020</div>
<div class="card" style="left:278.3px;top:430px;width:234px;height:232px"></div>
<div class="img" style="left:278.3px;top:430px;width:234px;height:123.3px;background:#f2f2f2"><svg width="234" height="123.3" viewBox="0 0 234 123.300" preserveAspectRatio="none">
<rect width="234" height="123.300" fill="#f2f2f2"/>
<!-- pipe over tanks -->
<path d="M46.200 58V52.200q0-2 2-2h24.300q2 0 2 2V58" fill="none" stroke="#c3c7cc" stroke-width="0.900"/>
<!-- right tank -->
<path d="M70.700 58.500q0-2.700 8.700-2.700t8.700 2.700V88H70.700z" fill="#c9ccd0"/>
<!-- strip between tanks -->
<rect x="62.700" y="57" width="8" height="31" fill="#eceef2"/>
<!-- left tank -->
<path d="M32.400 59q0-3.200 15.100-3.200T62.700 59v63H32.400z" fill="#e8eaee"/>
<path d="M45.400 56q8-.6 17.300 2.500V122H45.400z" fill="#c9ccd0"/>
<rect x="31" y="87" width="35" height="1.800" fill="#aeb5bc"/>
<g fill="#b9bec5"><rect x="31" y="61" width="6" height="1.800"/><rect x="31" y="66.800" width="6" height="1.800"/><rect x="31" y="72.600" width="6" height="1.800"/><rect x="31" y="78.300" width="6" height="1.800"/></g>
<!-- chimney -->
<path d="M132.100 2h7L140.400 70h-10.900z" fill="#e6e8ec"/>
<path d="M135.800 2h3.300L140.400 70h-4.600z" fill="#d4d7dc"/>
<path d="M131.600 13h8.100l.3 15.700h-8.800z" fill="#c2c7cd"/>
<path d="M135.800 13h3.900l.3 15.700h-4.200z" fill="#a9b0b8"/>
<path d="M131 39h9.200l.4 18h-9.900z" fill="#c2c7cd"/>
<path d="M135.800 39h4.400l.4 18h-4.800z" fill="#a9b0b8"/>
<rect x="131" y="-0.300" width="8" height="2.400" fill="#a3abb3"/>
<!-- chimney base -->
<rect x="125.600" y="70" width="20.700" height="17" fill="#c9ccd0"/>
<rect x="125.600" y="70" width="22" height="1.800" fill="#c0c4c9"/>
<!-- small upper building -->
<rect x="100.500" y="70" width="25.100" height="16" fill="#eceef1"/>
<rect x="110.100" y="77.300" width="4.700" height="4.400" fill="#fff"/>
<rect x="101.500" y="84.400" width="45" height="2.200" fill="#c9ccd0"/>
<!-- gray block right -->
<path d="M132.600 86h24.500L146 122H132.600z" fill="#c9ccd0"/>
<!-- main building -->
<rect x="62.700" y="86.900" width="69.900" height="35.100" fill="#e9ebef"/>
<g fill="#fff">
<rect x="71.800" y="92.600" width="4.700" height="9.100"/><rect x="78.900" y="92.600" width="4.700" height="9.100"/><rect x="86" y="92.600" width="4.700" height="9.100"/><rect x="93.100" y="92.600" width="4.700" height="9.100"/><rect x="100.200" y="92.600" width="4.700" height="9.100"/><rect x="107.300" y="92.600" width="4.700" height="9.100"/><rect x="114.400" y="92.600" width="4.700" height="9.100"/><rect x="121.500" y="92.600" width="4.700" height="9.100"/>
<rect x="71.800" y="106.900" width="4.700" height="9"/><rect x="78.900" y="106.900" width="4.700" height="9"/><rect x="86" y="106.900" width="4.700" height="9"/><rect x="93.100" y="106.900" width="4.700" height="9"/><rect x="100.200" y="106.900" width="4.700" height="9"/><rect x="107.300" y="106.900" width="4.700" height="9"/><rect x="114.400" y="106.900" width="4.700" height="9"/><rect x="121.500" y="106.900" width="4.700" height="9"/>
</g>
<!-- cooling tower -->
<path d="M157.200 78.400h27.500v9.300L200.200 122H142z" fill="#eceef1"/>
<path d="M157.200 78.400h27.500v9.300l7.800 17.300H149.400l7.800-17.300z" fill="#d0d3d7"/>
<path d="M171.400 78.400h13.300v9.300L200.200 122H188.500L171.400 87.700z" fill="#c5c9ce"/>
<path d="M171.400 78.400h13.300v9.300l7.800 17.300H180L171.400 87.700z" fill="#9fa8b1"/>
<rect x="154.900" y="74.800" width="16.500" height="3.600" fill="#c9cdd1"/>
<rect x="171.400" y="74.800" width="16.400" height="3.600" fill="#a0a8b0"/>
<!-- right pipe -->
<path d="M187.800 81.800h8.500q4.400 0 4.400 4.400V122" fill="none" stroke="#c6cacf" stroke-width="0.900"/>
<!-- ground -->
<rect x="26.700" y="121.400" width="180.500" height="1.300" fill="#cfd2d6"/>
</svg>
</div>
<svg class="abs" style="left:488.9px;top:437.3px" width="16" height="16" viewBox="0 0 16 16"><path d="M8.00 2.00L9.76 5.57L13.71 6.15L10.85 8.93L11.53 12.85L8.00 11.00L4.47 12.85L5.15 8.93L2.29 6.15L6.24 5.57z" fill="none" stroke="#000" stroke-width="1.3" stroke-linejoin="round"/></svg>
<div class="t name" id="r2n1" style="left:289px;top:566.5px;left:288.4px;top:566.3px;transform-origin:0 0;transform:scaleX(0.936)">BTown-019</div>
<div class="t name" id="r2n2" style="left:289px;top:584.3px;left:288.4px;top:584.0px;transform-origin:0 0;transform:scaleX(0.905)">BT-029</div>
<svg class="abs" style="left:289.1px;top:612.6px" width="9.2" height="12" viewBox="0 0 10 13"><path d="M5 0.400C2.500 0.400 0.500 2.300 0.500 4.700c0 3 4.500 7.800 4.500 7.800s4.500-4.800 4.500-7.800C9.500 2.300 7.500 0.400 5 0.400z" fill="#8e8e8e"/><circle cx="5" cy="4.600" r="1.700" fill="#fff"/></svg>
<div class="t loc" id="r2loc" style="left:306.5px;top:612.8px;left:306.6px;top:612.0px;transform-origin:0 0;transform:scaleX(0.91)">BayTown</div>
<svg class="abs" style="left:287.8px;top:638.1px" width="14" height="14" viewBox="0 0 14 14"><circle cx="7" cy="7" r="5.900" fill="none" stroke="#8f8f8f" stroke-width="1"/><path d="M7.300 4.600v2.700H4.800" fill="none" stroke="#8f8f8f" stroke-width="1"/></svg>
<div class="t mod" id="r2mod" style="left:308px;top:640.3px;left:307.6px;top:640.0px;transform-origin:0 0;transform:scaleX(0.896)">Last modified: Jun 9, 2022</div>
<div class="card" style="left:531px;top:430px;width:234px;height:232px"></div>
<div class="img" style="left:531px;top:430px;width:234px;height:123.3px;background:#f2f2f2"><svg width="234" height="123.3" viewBox="0 0 234 123.300" preserveAspectRatio="none">
<rect width="234" height="123.300" fill="#f2f2f2"/>
<!-- pipe over tanks -->
<path d="M46.200 58V52.200q0-2 2-2h24.300q2 0 2 2V58" fill="none" stroke="#c3c7cc" stroke-width="0.900"/>
<!-- right tank -->
<path d="M70.700 58.500q0-2.700 8.700-2.700t8.700 2.700V88H70.700z" fill="#c9ccd0"/>
<!-- strip between tanks -->
<rect x="62.700" y="57" width="8" height="31" fill="#eceef2"/>
<!-- left tank -->
<path d="M32.400 59q0-3.200 15.100-3.200T62.700 59v63H32.400z" fill="#e8eaee"/>
<path d="M45.400 56q8-.6 17.300 2.500V122H45.400z" fill="#c9ccd0"/>
<rect x="31" y="87" width="35" height="1.800" fill="#aeb5bc"/>
<g fill="#b9bec5"><rect x="31" y="61" width="6" height="1.800"/><rect x="31" y="66.800" width="6" height="1.800"/><rect x="31" y="72.600" width="6" height="1.800"/><rect x="31" y="78.300" width="6" height="1.800"/></g>
<!-- chimney -->
<path d="M132.100 2h7L140.400 70h-10.900z" fill="#e6e8ec"/>
<path d="M135.800 2h3.300L140.400 70h-4.600z" fill="#d4d7dc"/>
<path d="M131.600 13h8.100l.3 15.700h-8.800z" fill="#c2c7cd"/>
<path d="M135.800 13h3.900l.3 15.700h-4.200z" fill="#a9b0b8"/>
<path d="M131 39h9.200l.4 18h-9.900z" fill="#c2c7cd"/>
<path d="M135.800 39h4.400l.4 18h-4.800z" fill="#a9b0b8"/>
<rect x="131" y="-0.300" width="8" height="2.400" fill="#a3abb3"/>
<!-- chimney base -->
<rect x="125.600" y="70" width="20.700" height="17" fill="#c9ccd0"/>
<rect x="125.600" y="70" width="22" height="1.800" fill="#c0c4c9"/>
<!-- small upper building -->
<rect x="100.500" y="70" width="25.100" height="16" fill="#eceef1"/>
<rect x="110.100" y="77.300" width="4.700" height="4.400" fill="#fff"/>
<rect x="101.500" y="84.400" width="45" height="2.200" fill="#c9ccd0"/>
<!-- gray block right -->
<path d="M132.600 86h24.500L146 122H132.600z" fill="#c9ccd0"/>
<!-- main building -->
<rect x="62.700" y="86.900" width="69.900" height="35.100" fill="#e9ebef"/>
<g fill="#fff">
<rect x="71.800" y="92.600" width="4.700" height="9.100"/><rect x="78.900" y="92.600" width="4.700" height="9.100"/><rect x="86" y="92.600" width="4.700" height="9.100"/><rect x="93.100" y="92.600" width="4.700" height="9.100"/><rect x="100.200" y="92.600" width="4.700" height="9.100"/><rect x="107.300" y="92.600" width="4.700" height="9.100"/><rect x="114.400" y="92.600" width="4.700" height="9.100"/><rect x="121.500" y="92.600" width="4.700" height="9.100"/>
<rect x="71.800" y="106.900" width="4.700" height="9"/><rect x="78.900" y="106.900" width="4.700" height="9"/><rect x="86" y="106.900" width="4.700" height="9"/><rect x="93.100" y="106.900" width="4.700" height="9"/><rect x="100.200" y="106.900" width="4.700" height="9"/><rect x="107.300" y="106.900" width="4.700" height="9"/><rect x="114.400" y="106.900" width="4.700" height="9"/><rect x="121.500" y="106.900" width="4.700" height="9"/>
</g>
<!-- cooling tower -->
<path d="M157.200 78.400h27.500v9.300L200.200 122H142z" fill="#eceef1"/>
<path d="M157.200 78.400h27.500v9.300l7.800 17.300H149.400l7.800-17.300z" fill="#d0d3d7"/>
<path d="M171.400 78.400h13.300v9.300L200.200 122H188.500L171.400 87.700z" fill="#c5c9ce"/>
<path d="M171.400 78.400h13.300v9.300l7.800 17.300H180L171.400 87.700z" fill="#9fa8b1"/>
<rect x="154.900" y="74.800" width="16.500" height="3.600" fill="#c9cdd1"/>
<rect x="171.400" y="74.800" width="16.400" height="3.600" fill="#a0a8b0"/>
<!-- right pipe -->
<path d="M187.800 81.800h8.500q4.400 0 4.400 4.400V122" fill="none" stroke="#c6cacf" stroke-width="0.900"/>
<!-- ground -->
<rect x="26.700" y="121.400" width="180.500" height="1.300" fill="#cfd2d6"/>
</svg>
</div>
<svg class="abs" style="left:741.6px;top:437.3px" width="16" height="16" viewBox="0 0 16 16"><path d="M8.00 2.00L9.76 5.57L13.71 6.15L10.85 8.93L11.53 12.85L8.00 11.00L4.47 12.85L5.15 8.93L2.29 6.15L6.24 5.57z" fill="none" stroke="#000" stroke-width="1.3" stroke-linejoin="round"/></svg>
<div class="t name" id="r3n1" style="left:541.5px;top:566.5px;left:541.4px;top:566.3px;transform-origin:0 0;transform:scaleX(0.94)">Proj-002</div>
<div class="t name" id="r3n2" style="left:541.5px;top:584.3px;left:541.4px;top:584.0px;transform-origin:0 0;transform:scaleX(0.94)">Proj-002</div>
<svg class="abs" style="left:541.6px;top:612.6px" width="9.2" height="12" viewBox="0 0 10 13"><path d="M5 0.400C2.500 0.400 0.500 2.300 0.500 4.700c0 3 4.500 7.800 4.500 7.800s4.500-4.800 4.500-7.800C9.500 2.300 7.500 0.400 5 0.400z" fill="#8e8e8e"/><circle cx="5" cy="4.600" r="1.700" fill="#fff"/></svg>
<div class="t loc" id="r3loc" style="left:559.0px;top:612.8px;left:559.2px;top:612.0px;transform-origin:0 0;transform:scaleX(0.782)">US</div>
<svg class="abs" style="left:540.3px;top:638.1px" width="14" height="14" viewBox="0 0 14 14"><circle cx="7" cy="7" r="5.900" fill="none" stroke="#8f8f8f" stroke-width="1"/><path d="M7.300 4.600v2.700H4.800" fill="none" stroke="#8f8f8f" stroke-width="1"/></svg>
<div class="t mod" id="r3mod" style="left:560.5px;top:640.3px;left:560.5px;top:640.0px;transform-origin:0 0;transform:scaleX(0.899)">Last modified: Apr 22, 2021</div>

<!-- VIEW ALL -->
<div class="abs" style="left:340px;top:690px;width:109px;height:30.700px;border:1px solid #a9a9a9;border-radius:3px;background:#fff"></div>
<div class="t" id="viewall" style="left:354.300px;top:699.300px;font-size:12px;color:#444;left:354.3px;top:699.0px;transform-origin:0 0;transform:scaleX(0.933)">View all projects</div>

<!-- FOOTER -->
<svg class="abs" style="left:59.500px;top:751.500px" width="15" height="13" viewBox="0 0 15 13"><circle cx="10" cy="4.300" r="3.800" fill="#e9e9e9" stroke="#999" stroke-width="0.800"/><circle cx="5" cy="7.600" r="4.700" fill="#979797"/><path d="M9.900 2.300v3.600M8.600 2.500h2.600" stroke="#888" stroke-width="0.900" fill="none"/><circle cx="5" cy="5.300" r="0.800" fill="#e8e8e8"/><path d="M5 6.800v3.200" stroke="#e8e8e8" stroke-width="1.200"/></svg>
<div class="t ft" id="f0" style="left:77px;top:753.400px;left:77.1px;top:754.6px;transform-origin:0 0;transform:scaleX(0.911)">Powered by iTwin Services. PlantSight © 2022 Siemens AG and Bentley Systems Inc</div>
<div class="sep" style="left:434px"></div>
<div class="t ft" id="f1" style="left:441.900px;top:753.400px;left:441.9px;top:754.6px;transform-origin:0 0;transform:scaleX(0.894)">Terms of service</div>
<div class="sep" style="left:515px"></div>
<div class="t ft" id="f2" style="left:523.300px;top:753.400px;left:523.3px;top:754.6px;transform-origin:0 0;transform:scaleX(0.842)">Privacy</div>
<div class="sep" style="left:559px"></div>
<div class="t ft" id="f3" style="left:566.600px;top:753.400px;left:566.6px;top:754.6px;transform-origin:0 0;transform:scaleX(0.897)">Terms of use</div>
<div class="sep" style="left:626px"></div>
<div class="t ft" id="f4" style="left:633.500px;top:753.400px;left:633.5px;top:754.6px;transform-origin:0 0;transform:scaleX(0.885)">Cookies</div>
<div class="sep" style="left:673px"></div>
<div class="t ft" id="f5" style="left:680.300px;top:753.400px;left:680.3px;top:754.6px;transform-origin:0 0;transform:scaleX(0.914)">Legal notices</div>

</body>
</html>
